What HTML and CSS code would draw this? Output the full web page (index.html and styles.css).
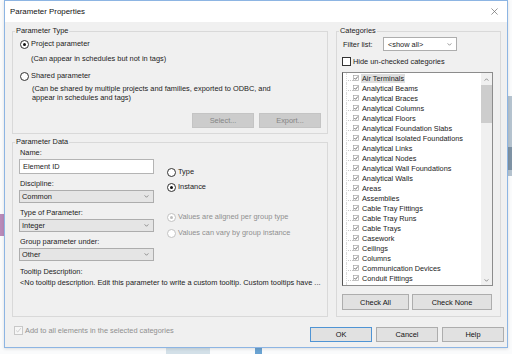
FILE: index.html
```html
<!DOCTYPE html>
<html lang="en">
<head>
    <meta charset="UTF-8">
    <meta name="viewport" content="width=device-width, initial-scale=1.0">
    <title>Parameter Properties</title>
    <link rel="stylesheet" href="styles.css">
</head>
<body>
    <!-- bits of the desktop behind the dialog -->
    <div class="desk-purple"></div>
    <div class="desk-right"></div>
    <div class="desk-right dark"></div>
    <div class="desk-bottom"></div>
    <div class="desk-bottom blue"></div>

    <div class="window">
        <div class="titlebar">
            <span class="title">Parameter Properties</span>
            <svg class="close" viewBox="0 0 8 8"><path d="M0.5 0.5 L7.5 7.5 M7.5 0.5 L0.5 7.5"/></svg>
        </div>
        <div class="content">
            <div class="main">
                <div class="left">
                    <div class="group type-box">
                        <span class="legend">Parameter Type</span>
                        <div class="radio-row r1"><span class="radio on"></span>Project parameter</div>
                        <div class="desc d1">(Can appear in schedules but not in tags)</div>
                        <div class="radio-row r2"><span class="radio"></span>Shared parameter</div>
                        <div class="desc d2">(Can be shared by multiple projects and families, exported to ODBC, and<br>appear in schedules and tags)</div>
                        <div class="btn-row">
                            <button class="btn off">Select...</button>
                            <button class="btn off">Export...</button>
                        </div>
                    </div>

                    <div class="group data-box">
                        <span class="legend">Parameter Data</span>
                        <div class="fields">
                            <div class="fcol">
                                <div class="label">Name:</div>
                                <div class="input">Element ID</div>
                                <div class="label gap">Discipline:</div>
                                <div class="select">Common <svg class="chev" viewBox="0 0 6 4"><path d="M0.5 0.5 L3 3 L5.5 0.5"/></svg></div>
                                <div class="label gap">Type of Parameter:</div>
                                <div class="select">Integer <svg class="chev" viewBox="0 0 6 4"><path d="M0.5 0.5 L3 3 L5.5 0.5"/></svg></div>
                                <div class="label gap">Group parameter under:</div>
                                <div class="select">Other <svg class="chev" viewBox="0 0 6 4"><path d="M0.5 0.5 L3 3 L5.5 0.5"/></svg></div>
                            </div>
                            <div class="rcol">
                                <div class="radio-row t1"><span class="radio"></span>Type</div>
                                <div class="radio-row t2"><span class="radio on"></span>Instance</div>
                                <div class="radio-row t3 dis"><span class="radio on"></span>Values are aligned per group type</div>
                                <div class="radio-row t4 dis"><span class="radio"></span>Values can vary by group instance</div>
                            </div>
                        </div>
                        <div class="label tip-label">Tooltip Description:</div>
                        <div class="label tip-text">&lt;No tooltip description. Edit this parameter to write a custom tooltip. Custom tooltips have ...</div>
                    </div>
                </div>

                <div class="group cat-box">
                    <span class="legend">Categories</span>
                    <div class="filter-row">
                        <span class="filter-label">Filter list:</span>
                        <div class="select white">&lt;show all&gt; <svg class="chev" viewBox="0 0 6 4"><path d="M0.5 0.5 L3 3 L5.5 0.5"/></svg></div>
                    </div>
                    <div class="hide-row"><span class="box"></span>Hide un-checked categories</div>
                    <div class="list">
                        <div class="items" id="items"></div>
                        <div class="scroll">
                            <svg class="arrow" viewBox="0 0 6 4"><path d="M0.5 3.5 L3 1 L5.5 3.5"/></svg>
                            <div class="thumb"></div>
                            <svg class="arrow down" viewBox="0 0 6 4"><path d="M0.5 0.5 L3 3 L5.5 0.5"/></svg>
                        </div>
                    </div>
                    <div class="cat-btns">
                        <button class="btn all">Check All</button>
                        <button class="btn none">Check None</button>
                    </div>
                </div>
            </div>

            <div class="footer">
                <div class="agree">
                    <span class="box dis"><svg viewBox="0 0 9 9"><path d="M1.5 4.5 L3.5 6.5 L7.5 1.5"/></svg></span>
                    Add to all elements in the selected categories
                </div>
                <div class="actions">
                    <button class="btn ok">OK</button>
                    <button class="btn">Cancel</button>
                    <button class="btn">Help</button>
                </div>
            </div>
        </div>
    </div>

    <script>
        const categories = [
            'Air Terminals', 'Analytical Beams', 'Analytical Braces', 'Analytical Columns',
            'Analytical Floors', 'Analytical Foundation Slabs', 'Analytical Isolated Foundations',
            'Analytical Links', 'Analytical Nodes', 'Analytical Wall Foundations', 'Analytical Walls',
            'Areas', 'Assemblies', 'Cable Tray Fittings', 'Cable Tray Runs', 'Cable Trays',
            'Casework', 'Ceilings', 'Columns', 'Communication Devices', 'Conduit Fittings', ''
        ]
        let list = document.getElementById("items");
        categories.forEach((name, i) => {
            let row = document.createElement("div");
            row.className = "item";
            row.innerHTML = `<span class="tree"></span>
                <svg class="tick" viewBox="0 0 6 6"><rect x="0.5" y="0.5" width="5" height="5"/><path d="M1.3 3 L2.6 4.3 L4.8 1.5"/></svg>
                <span class="name${i === 0 ? ' sel' : ''}">${name}</span>`;
            list.appendChild(row);
        })
    </script>
</body>
</html>
```

FILE: styles.css
```css
*{
    margin: 0;
    padding: 0;
    box-sizing: border-box;
}
body{
    width: 512px;
    height: 354px;
    position: relative;
    overflow: hidden;
    background-color: #fafbfc;
    font-family: "Liberation Sans", Arial, sans-serif;
    font-size: 7.4px;
    color: #1b1b1b;
}
.desk-purple{
    position: absolute;
    left: 0;
    top: 214px;
    width: 4px;
    height: 22px;
    background-color: #b98ab9;
}
.desk-right{
    position: absolute;
    right: 0;
    top: 96px;
    width: 4px;
    height: 80px;
    background-color: #b5c3cf;
}
.desk-right.dark{
    top: 147px;
    height: 23px;
    background-color: #7f93a5;
}
.desk-bottom{
    position: absolute;
    left: 166px;
    bottom: 0;
    width: 44px;
    height: 6px;
    background-color: #d3e0e8;
}
.desk-bottom.blue{
    left: 255px;
    width: 7px;
    background-color: #6aa3d2;
}
.window{
    position: relative;
    margin-left: 4px;
    width: 504px;
    height: 348px;
    border: 1px solid #8db5e3;
    background-color: #f0f0f0;
    box-shadow: 0 1px 3px rgba(0, 0, 0, 0.12);
}
.titlebar{
    height: 21px;
    background-color: white;
    display: flex;
    justify-content: space-between;
    align-items: center;
    padding: 0 9px 0 5px;
}
.title{
    font-size: 7.9px;
    color: #111;
}
.close{
    width: 7px;
    height: 7px;
    fill: none;
    stroke: #6b6b6b;
    stroke-width: 0.8;
}
.main{
    display: flex;
    gap: 8px;
    padding: 9px 0 0 7px;
}
.left{
    width: 316px;
    display: flex;
    flex-direction: column;
    gap: 8px;
}
.group{
    position: relative;
    border: 1px solid #d9d9d9;
}
.legend{
    position: absolute;
    top: -6px;
    left: 2px;
    padding: 0 1px;
    line-height: 10px;
    background-color: #f0f0f0;
}
.radio-row{
    display: flex;
    align-items: center;
    height: 10px;
    line-height: 10px;
    white-space: nowrap;
}
.radio{
    position: relative;
    flex: none;
    width: 9px;
    height: 9px;
    margin-right: 2px;
    border: 1px solid #333;
    border-radius: 50%;
    background-color: white;
}
.radio.on::after{
    content: "";
    position: absolute;
    left: 2px;
    top: 2px;
    width: 3px;
    height: 3px;
    border-radius: 50%;
    background-color: #111;
}
.dis{
    color: #8f8f8f;
}
.dis .radio{
    border-color: #c2c2c2;
}
.dis .radio.on::after{
    background-color: #bdbdbd;
}

/* parameter type */
.type-box{
    height: 103px;
    padding: 7px 0 0 7px;
}
.desc{
    padding-left: 11px;
    line-height: 10px;
    white-space: nowrap;
}
.d1{
    margin-top: 5px;
}
.r2{
    margin-top: 7px;
}
.d2{
    margin-top: 3px;
    padding-left: 12px;
    line-height: 9px;
}
.btn-row{
    display: flex;
    justify-content: flex-end;
    gap: 5px;
    margin-top: 11px;
    padding-right: 6px;
}
.btn{
    width: 62px;
    height: 15px;
    border: 1px solid #adadad;
    background-color: #e1e1e1;
    font: inherit;
    color: #111;
}
.btn.off{
    background-color: #cccccc;
    border-color: #c4c4c4;
    color: #858585;
}

/* parameter data */
.data-box{
    height: 175px;
    padding: 5px 0 0 6px;
}
.fields{
    display: flex;
}
.fcol{
    width: 135px;
}
.label{
    padding-left: 1px;
    line-height: 10px;
    white-space: nowrap;
}
.label.gap{
    margin-top: 5px;
}
.input{
    height: 15px;
    margin-top: 1px;
    padding-left: 3px;
    line-height: 13px;
    border: 1px solid #b4b4b4;
    background-color: white;
}
.select{
    height: 13px;
    margin-top: 1px;
    padding: 0 4px 0 2px;
    display: flex;
    justify-content: space-between;
    align-items: center;
    border: 1px solid #adadad;
    background-color: #e5e5e5;
}
.select.white{
    width: 74px;
    height: 14px;
    margin: 0;
    padding-left: 4px;
    background-color: white;
}
.chev{
    width: 5px;
    height: 3px;
    fill: none;
    stroke: #555;
    stroke-width: 0.8;
}
.rcol{
    margin-left: 13px;
}
.t1{
    margin-top: 19px;
}
.t2{
    margin-top: 5px;
}
.t3{
    margin-top: 20px;
}
.t4{
    margin-top: 6px;
}
.tip-label{
    margin-top: 6px;
}
.tip-text{
    margin-top: 1px;
}

/* categories */
.cat-box{
    width: 165px;
    height: 286px;
    padding: 5px 0 0 5px;
}
.filter-row{
    display: flex;
    align-items: center;
}
.filter-label{
    width: 41px;
    padding-left: 1px;
}
.hide-row{
    display: flex;
    align-items: center;
    height: 9px;
    margin-top: 6px;
}
.box{
    flex: none;
    width: 9px;
    height: 9px;
    margin-right: 2px;
    border: 1px solid #333;
    background-color: white;
}
.list{
    display: flex;
    width: 151px;
    height: 214px;
    margin-top: 6px;
    border: 1px solid #8c8c8c;
    border-left-color: #555;
    background-color: white;
    overflow: hidden;
}
.items{
    flex: 1;
}
.item{
    display: flex;
    align-items: center;
    height: 10px;
    font-size: 7.3px;
    white-space: nowrap;
}
.tree{
    flex: none;
    width: 7px;
    height: 10px;
    margin-left: 3px;
    border-left: 1px dotted #dadada;
    background: repeating-linear-gradient(90deg, #c4c4c4 0 1px, transparent 1px 2px) no-repeat 1px 7px / 5px 1px;
}
.tick{
    flex: none;
    width: 6px;
    height: 6px;
    margin-right: 2px;
    fill: white;
    stroke: #333;
    stroke-width: 0.7;
}
.tick rect{
    stroke: #a5a5a5;
}
.name{
    padding: 0 1px;
    line-height: 9px;
}
.name.sel{
    background-color: #dedede;
}
.scroll{
    width: 11px;
    display: flex;
    flex-direction: column;
    align-items: center;
    background-color: #f0f0f0;
}
.arrow{
    width: 5px;
    height: 3px;
    margin: 5px 0 4px;
    fill: none;
    stroke: #555;
    stroke-width: 0.8;
}
.arrow.down{
    margin: auto 0 3px;
}
.thumb{
    width: 11px;
    height: 38px;
    background-color: #cdcdcd;
}
.cat-btns{
    display: flex;
    gap: 3px;
    margin-top: 8px;
}
.btn.all{
    width: 67px;
    height: 16px;
}
.btn.none{
    width: 80px;
    height: 16px;
}

/* bottom */
.footer{
    display: flex;
    justify-content: space-between;
    align-items: flex-start;
    margin-top: 10px;
    padding: 0 3px 0 9px;
}
.agree{
    display: flex;
    align-items: center;
    margin-top: -1px;
    color: #8f8f8f;
}
.box.dis{
    border-color: #c8c8c8;
    background-color: #f6f6f6;
}
.box.dis svg{
    display: block;
    width: 7px;
    height: 7px;
    fill: none;
    stroke: #bdbdbd;
    stroke-width: 0.9;
}
.actions{
    display: flex;
    gap: 4px;
}
.btn.ok{
    border-color: #4f94d4;
}
```
